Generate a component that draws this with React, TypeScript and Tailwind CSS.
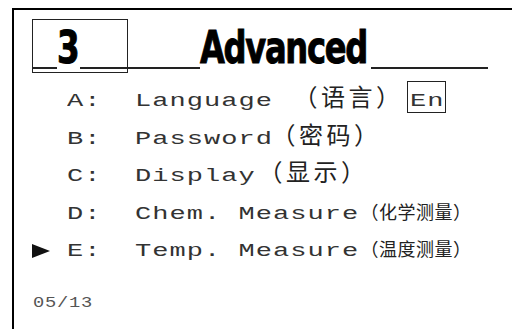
const mono = "font-['Liberation_Mono','Courier_New',monospace]";
const cjk = "font-['Noto_Sans_CJK_SC','Noto_Sans_CJK_JP',sans-serif]";

type Row = {
  key: string;
  name: string;
  nameWidth: string;
  zh: string;
  zhClass: string;
  selected?: boolean;
  tag?: string;
};

const rows: Row[] = [
  { key: 'A:', name: 'Language', nameWidth: 'w-[137.6px]', zh: '（语言）', zhClass: 'ml-[21px] text-[24px] tracking-[3.5px]', tag: 'En' },
  { key: 'B:', name: 'Password', nameWidth: 'w-[137.6px]', zh: '（密码）', zhClass: 'ml-[-1px] text-[24px] tracking-[3.5px]' },
  { key: 'C:', name: 'Display', nameWidth: 'w-[120.4px]', zh: '（显示）', zhClass: 'ml-[3px] text-[24px] tracking-[3.5px]' },
  { key: 'D:', name: 'Chem. Measure', nameWidth: 'w-[223.6px]', zh: '（化学测量）', zhClass: 'ml-[2px] text-[18px] tracking-[0.5px]' },
  { key: 'E:', name: 'Temp. Measure', nameWidth: 'w-[223.6px]', zh: '（温度测量）', zhClass: 'ml-[2px] text-[18px] tracking-[0.5px]', selected: true },
];

// Courier on the device is drawn wide; stretch the mono text to the same cells
function Wide({ text, className }: { text: string; className: string }) {
  return (
    <span className={`inline-block shrink-0 ${className}`}>
      <span className="inline-block origin-left scale-x-[1.5] whitespace-pre tracking-[0.7px]">{text}</span>
    </span>
  );
}

function MenuRow({ row }: { row: Row }) {
  return (
    <div className={`flex h-[37.5px] items-baseline text-[18px] text-[#333] ${mono}`}>
      <span className="flex w-[53px] shrink-0 items-baseline pl-[18px] leading-[40px]">
        {row.selected ? (
          <svg width="18" height="14" viewBox="0 0 18 14" className="translate-y-[2px]">
            <path d="M0 0 L18 7 L0 14 Z" fill="#111" />
          </svg>
        ) : (
          <span>&nbsp;</span>
        )}
      </span>
      <Wide text={row.key} className="w-[68px] leading-[40px]" />
      <Wide text={row.name} className={`${row.nameWidth} leading-none`} />
      <span className={`shrink-0 leading-none text-[#222] ${cjk} ${row.zhClass}`}>{row.zh}</span>
      {row.tag ? (
        <span className="ml-[3.5px] inline-block w-[39px] shrink-0 border border-[#222] pl-[2px] pt-[10px] pb-[2px] leading-none">
          <span className="inline-block origin-left scale-x-[1.5] tracking-[0.7px]">{row.tag}</span>
        </span>
      ) : null}
    </div>
  );
}

export default function App() {
  return (
    <div className="h-[329px] w-[512px] overflow-hidden bg-white">
      <div className="ml-[12px] mt-[8px] h-[340px] border-l-2 border-t-2 border-black">
        <div className="relative">
          <div className="absolute left-[18px] top-[9px] h-[54px] w-[96px] border border-[#222]" />
          <div className="flex items-baseline pl-[18px] pt-[15.8px] text-[44px] font-bold leading-none text-black font-['DejaVu_Sans',sans-serif] [-webkit-text-stroke:1px_black]">
            <span className="w-[25px] shrink-0 translate-y-[6px] border-b-2 border-[#222]" />
            <span className="flex w-[23px] shrink-0 justify-center">
              <span className="inline-block scale-x-[0.74]">3</span>
            </span>
            <span className="w-[120px] shrink-0 translate-y-[6px] border-b-2 border-[#222]" />
            <span className="w-[166px] shrink-0">
              <span className="inline-block origin-left scale-x-[0.73] tracking-[-1.75px]">Advanced</span>
            </span>
            <span className="ml-[5px] w-[117px] shrink-0 translate-y-[6px] border-b-2 border-[#222]" />
          </div>
        </div>
        <div className="mt-[11.4px]">
          {rows.map((row) => (
            <MenuRow key={row.key} row={row} />
          ))}
        </div>
        <div className={`mt-[27.8px] pl-[19px] text-[15px] leading-none text-[#555] ${mono}`}>
          <span className="inline-block origin-left scale-x-[1.25] tracking-[0.6px]">05/13</span>
        </div>
      </div>
    </div>
  );
}
